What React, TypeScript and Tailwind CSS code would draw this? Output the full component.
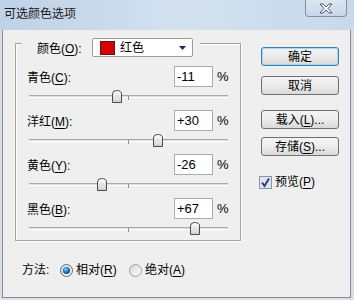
import React from 'react';

const FONT = "font-[family-name:Liberation_Sans,Noto_Sans_CJK_SC,sans-serif]";

const rows = [
  { name: '青色', key: 'C', value: -11 },
  { name: '洋红', key: 'M', value: 30 },
  { name: '黄色', key: 'Y', value: -26 },
  { name: '黑色', key: 'B', value: 67 },
];

function Label({ name, k }: { name: string; k: string }) {
  return (
    <span className="text-[12px] leading-none text-black">
      {name}(<span className="underline underline-offset-2">{k}</span>):
    </span>
  );
}

function Thumb() {
  return (
    <svg width="10" height="13" viewBox="0 0 10 13">
      <defs>
        <linearGradient id="th" x1="0" y1="0" x2="0" y2="1">
          <stop offset="0" stopColor="#ffffff" />
          <stop offset="1" stopColor="#cfcfcf" />
        </linearGradient>
      </defs>
      <path d="M0.5 12.5 V4 Q0.5 0.5 4.5 0.5 Q9.5 0.5 9.5 4 V12.5 Z" fill="url(#th)" stroke="#4a4a4a" />
      <rect x="3" y="5" width="4" height="5" fill="#e2e2e2" />
    </svg>
  );
}

function Slider({ value }: { value: number }) {
  return (
    <div className="relative ml-[2px] h-[23px] w-[199px]">
      <div className="absolute left-0 right-0 top-[8px] h-[3px] border-t border-b border-t-[#a8a8a8] border-b-white bg-[#dedede]" />
      <div className="absolute left-[99px] top-[9px] h-[4px] w-px bg-[#8f8f8f]" />
      <div className="absolute top-[3px]" style={{ left: 99 + value - 5 }}>
        <Thumb />
      </div>
    </div>
  );
}

function Row({ name, k, value }: { name: string; k: string; value: number }) {
  const text = value > 0 ? `+${value}` : `${value}`;
  return (
    <div className="flex h-[44px] flex-col">
      <div className="flex h-[21px] items-center">
        <div className="w-[147px]">
          <Label name={name} k={k} />
        </div>
        <div className="flex h-[21px] w-[39px] items-center border border-[#a7acb3] bg-white pl-[2px] text-[13px] text-black">
          {text}
        </div>
        <span className="ml-[4px] text-[13px] text-black">%</span>
      </div>
      <Slider value={value} />
    </div>
  );
}

function Button({ children, primary }: { children: React.ReactNode; primary?: boolean }) {
  return (
    <div
      className={`flex h-[19px] w-[78px] items-center justify-center rounded-[3px] border bg-gradient-to-b from-[#f4f4f4] via-[#ececec] to-[#d9d9d9] text-[12px] text-black ${
        primary ? 'border-[#3c7fb1] shadow-[inset_0_0_0_1px_#a9d6f0]' : 'border-[#707070]'
      }`}
    >
      {children}
    </div>
  );
}

function Radio({ checked }: { checked?: boolean }) {
  return (
    <svg width="13" height="13" viewBox="0 0 13 13">
      <defs>
        <radialGradient id="rdot" cx="0.4" cy="0.35" r="0.7">
          <stop offset="0" stopColor="#8fd0ff" />
          <stop offset="0.5" stopColor="#2a7cc0" />
          <stop offset="1" stopColor="#0c3f6e" />
        </radialGradient>
        <linearGradient id="rbg" x1="0" y1="0" x2="1" y2="1">
          <stop offset="0" stopColor="#d6d6d6" />
          <stop offset="1" stopColor="#ffffff" />
        </linearGradient>
      </defs>
      <circle cx="6.5" cy="6.5" r="6" fill="url(#rbg)" stroke={checked ? '#55697e' : '#a0a0a0'} />
      {checked && <circle cx="6.5" cy="6.5" r="3.6" fill="url(#rdot)" />}
    </svg>
  );
}

export default function App() {
  return (
    <div className={`flex h-[300px] w-[354px] flex-col bg-[#d6e0ea] ${FONT}`}>
      <div className="flex h-[30px] items-start justify-between bg-gradient-to-r from-[#bed1e7] via-[#d3e1ef] to-[#c9d9ea] pl-[4px] pr-[7px]">
        <span className="mt-[8px] text-[12px] leading-none text-[#1a1a1a]">可选颜色选项</span>
        <div className="flex h-[17px] w-[42px] items-center justify-center rounded-b-[4px] border border-t-0 border-[#7f8fa3] bg-gradient-to-b from-[#dde7f2] to-[#c7d6e7]">
          <svg width="14" height="11" viewBox="0 0 14 11">
            <path
              d="M1 1 H4 L7 4 L10 1 H13 L9 5.5 L13 10 H10 L7 7 L4 10 H1 L5 5.5 Z"
              fill="#ffffff"
              stroke="#4d5a6a"
              strokeWidth="1"
              strokeLinejoin="round"
            />
          </svg>
        </div>
      </div>
      <div className="mb-[2px] ml-[2px] mr-[3px] flex flex-1 border border-t-0 border-[#8b8b8b] bg-[#efefef]">
        <div className="flex flex-col pl-[12px] pt-[13px]">
          <div className="flex h-[198px] w-[226px] flex-col border border-[#a3a3a3] shadow-[inset_1px_1px_0_#ffffff,1px_1px_0_#ffffff]">
            <div className="-mt-[6px] ml-[6px] flex h-[19px] w-[178px] items-center bg-[#efefef] pl-[15px]">
              <div className="w-[55px]">
                <Label name="颜色" k="O" />
              </div>
              <div className="flex h-[19px] w-[101px] items-center rounded-[2px] border border-[#9c9c9c] bg-white pl-[7px]">
                <div className="h-[14px] w-[15px] border border-[#6a1010] bg-[#d90000]" />
                <span className="ml-[5px] text-[12px] leading-none text-black">红色</span>
                <svg className="ml-auto mr-[6px]" width="7" height="4" viewBox="0 0 7 4">
                  <path d="M0 0 H7 L3.5 4 Z" fill="#1b2a5c" />
                </svg>
              </div>
            </div>
            <div className="mt-[9px] flex flex-col pl-[11px]">
              {rows.map((r) => (
                <Row key={r.key} name={r.name} k={r.key} value={r.value} />
              ))}
            </div>
          </div>
          <div className="ml-[7px] mt-[19px] flex h-[20px] items-center text-[12px] text-black">
            <span className="w-[38px]">方法:</span>
            <Radio checked />
            <span className="ml-[3px] w-[53px]">
              相对(<span className="underline underline-offset-2">R</span>)
            </span>
            <Radio />
            <span className="ml-[3px]">
              绝对(<span className="underline underline-offset-2">A</span>)
            </span>
          </div>
        </div>
        <div className="ml-[20px] flex flex-col pt-[17px]">
          <Button primary>确定</Button>
          <div className="mt-[10px]">
            <Button>取消</Button>
          </div>
          <div className="mt-[15px]">
            <Button>
              载入(<span className="underline underline-offset-2">L</span>)...
            </Button>
          </div>
          <div className="mt-[8px]">
            <Button>
              存储(<span className="underline underline-offset-2">S</span>)...
            </Button>
          </div>
          <div className="mt-[17px] flex items-center">
            <svg width="13" height="13" viewBox="0 0 13 13" className="ml-[-2px]">
              <rect x="0.5" y="0.5" width="12" height="12" fill="#dde4f2" stroke="#8e94a8" />
              <path d="M3 6.5 L5.5 10 L10 2.5" fill="none" stroke="#2c3d8a" strokeWidth="2" />
            </svg>
            <span className="ml-[3px] text-[12px] text-black">
              预览(<span className="underline underline-offset-2">P</span>)
            </span>
          </div>
        </div>
      </div>
    </div>
  );
}
